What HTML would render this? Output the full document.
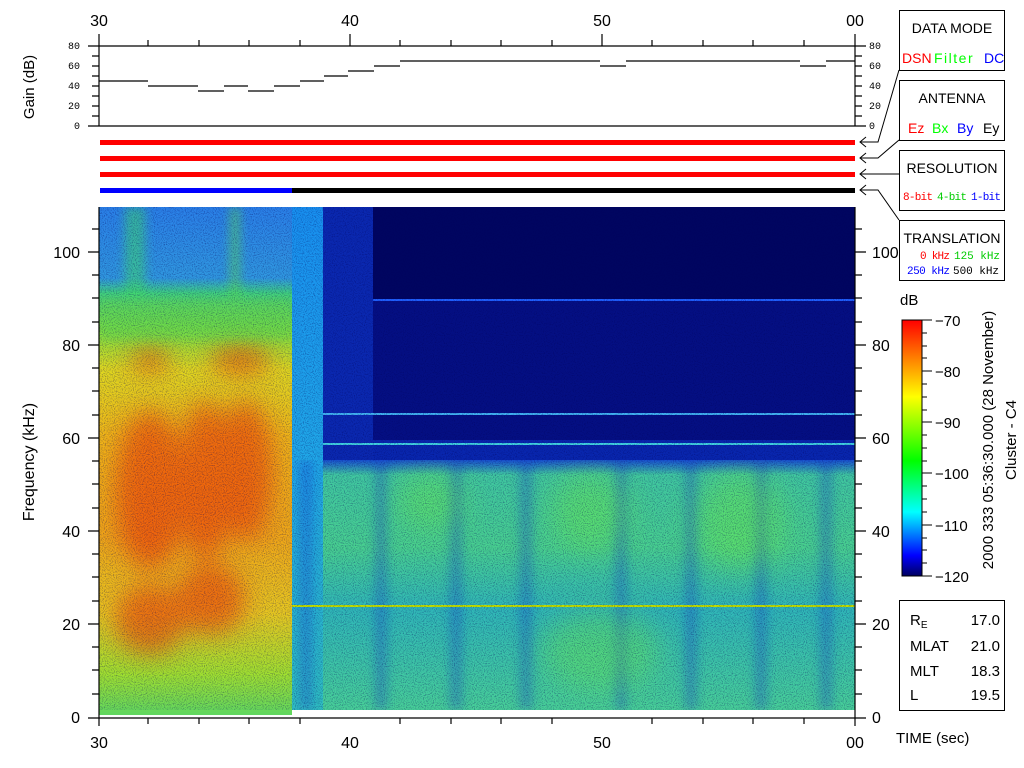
<!DOCTYPE html>
<html><head><meta charset="utf-8"><style>
html,body{margin:0;padding:0;background:#fff;width:1024px;height:768px;overflow:hidden}
svg text{font-family:"Liberation Sans",sans-serif}
</style></head><body>
<svg width="1024" height="768" viewBox="0 0 1024 768" xmlns="http://www.w3.org/2000/svg">
<defs>
<linearGradient id="lb" x1="0" y1="0" x2="0" y2="1">
<stop offset="0" stop-color="#2a80e8"/><stop offset="0.14" stop-color="#3098e0"/>
<stop offset="0.17" stop-color="#40d080"/><stop offset="0.24" stop-color="#80e040"/>
<stop offset="0.32" stop-color="#e0d820"/><stop offset="0.45" stop-color="#f0b818"/>
<stop offset="0.65" stop-color="#f0a818"/><stop offset="0.80" stop-color="#e8c820"/>
<stop offset="0.92" stop-color="#a0e030"/><stop offset="1" stop-color="#60d860"/>
</linearGradient>
<linearGradient id="cyc" x1="0" y1="0" x2="0" y2="1">
<stop offset="0" stop-color="#1890f0"/><stop offset="0.5" stop-color="#20a8e8"/><stop offset="1" stop-color="#30c0c0"/>
</linearGradient>
<linearGradient id="gr" x1="0" y1="0" x2="0" y2="1">
<stop offset="0" stop-color="#1850d0"/><stop offset="0.06" stop-color="#40c8a0"/><stop offset="0.35" stop-color="#48d090"/>
<stop offset="0.6" stop-color="#30b8b8"/><stop offset="1" stop-color="#48d098"/>
</linearGradient>
<linearGradient id="cb" x1="0" y1="0" x2="0" y2="1">
<stop offset="0" stop-color="#ff0000"/><stop offset="0.15" stop-color="#ff8000"/>
<stop offset="0.3" stop-color="#ffff00"/><stop offset="0.55" stop-color="#00ff00"/>
<stop offset="0.75" stop-color="#00ffff"/><stop offset="0.92" stop-color="#0000ff"/>
<stop offset="1" stop-color="#000060"/>
</linearGradient>
<filter id="bl" x="-30%" y="-30%" width="160%" height="160%"><feGaussianBlur stdDeviation="12"/></filter>
<filter id="bl2" x="-30%" y="-30%" width="160%" height="160%"><feGaussianBlur stdDeviation="5"/></filter>
<filter id="bl3" x="-50%" y="-50%" width="200%" height="200%"><feGaussianBlur stdDeviation="15"/></filter>
<filter id="nz" x="0" y="0" width="100%" height="100%">
<feTurbulence type="fractalNoise" baseFrequency="0.9" numOctaves="1" seed="3"/>
<feColorMatrix type="matrix" values="0 0 0 0 0  0 0 0 0 0  0 0 0 0 0.1  0 0 0 1.2 -0.55"/>
</filter>
<clipPath id="lc"><rect x="99" y="207" width="193" height="508"/></clipPath>
<clipPath id="gc"><rect x="292" y="460" width="563" height="250"/></clipPath>
</defs>

<g font-size="16" text-anchor="middle">
<text x="99" y="26">30</text><text x="350" y="26">40</text><text x="602" y="26">50</text><text x="855" y="26">00</text>
</g>
<g stroke="#000" stroke-width="1.2" fill="none">
<path d="M99 34V126M88 46H866M88 126H866M855 34V126"/>
<path d="M148 40V46M199 40V46M249 40V46M300 40V46M350 34V46M400 40V46M451 40V46M501 40V46M552 40V46M602 34V46M652 40V46M703 40V46M753 40V46M804 40V46"/>
<path d="M92 56H99M92 66H99M92 76H99M92 86H99M92 96H99M92 106H99M92 116H99"/>
<path d="M855 56H862M855 66H862M855 76H862M855 86H862M855 96H862M855 106H862M855 116H862"/>
<path d="M99 81H148M148 86H198M198 91H224M224 86H248M248 91H274M274 86H300M300 81H324M324 76H348M348 71H374M374 66H400M400 61H600M600 66H626M626 61H800M800 66H826M826 61H855"/>
</g>
<g font-size="10" text-anchor="end">
<text x="80" y="49" style="font-family:'Liberation Mono',monospace">80</text>
<text x="80" y="69" style="font-family:'Liberation Mono',monospace">60</text>
<text x="80" y="89" style="font-family:'Liberation Mono',monospace">40</text>
<text x="80" y="109" style="font-family:'Liberation Mono',monospace">20</text>
<text x="80" y="129" style="font-family:'Liberation Mono',monospace">0</text>
</g>
<g font-size="10">
<text x="869" y="49" style="font-family:'Liberation Mono',monospace">80</text>
<text x="869" y="69" style="font-family:'Liberation Mono',monospace">60</text>
<text x="869" y="89" style="font-family:'Liberation Mono',monospace">40</text>
<text x="869" y="109" style="font-family:'Liberation Mono',monospace">20</text>
<text x="869" y="129" style="font-family:'Liberation Mono',monospace">0</text>
</g>
<text transform="translate(34,87) rotate(-90)" font-size="15" text-anchor="middle">Gain (dB)</text>

<rect x="100" y="140" width="755" height="5" fill="#f00"/>
<rect x="100" y="156" width="755" height="5" fill="#f00"/>
<rect x="100" y="172" width="755" height="5" fill="#f00"/>
<rect x="100" y="188" width="192" height="5" fill="#00f"/>
<rect x="292" y="188" width="563" height="5" fill="#000"/>

<g stroke="#000" stroke-width="1" fill="none">
<path d="M899 70L878 142H860M866 137L860 142L866 147"/>
<path d="M899 140L878 158H860M866 153L860 158L866 163"/>
<path d="M899 174H860M866 169L860 174L866 179"/>
<path d="M899 220L878 190H860M866 185L860 190L866 195"/>
</g>

<rect x="99" y="207" width="193" height="508" fill="url(#lb)"/>
<g clip-path="url(#lc)">
<g fill="#f02000" opacity="0.5" filter="url(#bl)">
<ellipse cx="150" cy="490" rx="35" ry="80"/>
<ellipse cx="205" cy="480" rx="25" ry="80"/>
<ellipse cx="245" cy="470" rx="28" ry="70"/>
<ellipse cx="150" cy="620" rx="35" ry="35"/>
<ellipse cx="210" cy="600" rx="35" ry="35"/>
<ellipse cx="240" cy="360" rx="30" ry="15"/>
<ellipse cx="150" cy="360" rx="20" ry="12"/>
</g>
<g filter="url(#bl2)" opacity="0.5">
<rect x="125" y="207" width="20" height="90" fill="#40e060"/>
<rect x="230" y="207" width="10" height="90" fill="#60e040"/>
<rect x="99" y="300" width="193" height="40" fill="#60d850"/>
</g>
</g>
<rect x="292" y="207" width="31" height="503" fill="url(#cyc)"/>
<rect x="323" y="207" width="532" height="253" fill="#000560"/>
<rect x="323" y="207" width="50" height="253" fill="#0a28b0"/>
<rect x="373" y="300" width="482" height="160" fill="#0818a0" opacity="0.55"/>
<rect x="373" y="440" width="482" height="25" fill="#0a30c0" opacity="0.7"/>
<rect x="323" y="460" width="532" height="250" fill="url(#gr)"/>
<g clip-path="url(#gc)" filter="url(#bl2)" opacity="0.3">
<rect x="300" y="460" width="12" height="250" fill="#1030d0"/>
<rect x="375" y="460" width="12" height="250" fill="#1030d0"/>
<rect x="450" y="460" width="12" height="250" fill="#1030d0"/>
<rect x="520" y="460" width="12" height="250" fill="#1030d0"/>
<rect x="615" y="460" width="12" height="250" fill="#1030d0"/>
<rect x="685" y="460" width="12" height="250" fill="#1030d0"/>
<rect x="755" y="460" width="12" height="250" fill="#1030d0"/>
<rect x="820" y="460" width="12" height="250" fill="#1030d0"/>
</g>
<g clip-path="url(#gc)" filter="url(#bl3)" opacity="0.3" fill="#80ff20">
<ellipse cx="590" cy="510" rx="40" ry="40"/>
<ellipse cx="740" cy="520" rx="45" ry="50"/>
<ellipse cx="430" cy="500" rx="35" ry="30"/>
<ellipse cx="600" cy="650" rx="60" ry="40"/>
</g>
<rect x="373" y="299" width="482" height="2" fill="#2060ff"/>
<rect x="323" y="413" width="532" height="2" fill="#40b0f0"/>
<rect x="323" y="443" width="532" height="2" fill="#40d0e0"/>
<rect x="292" y="605" width="563" height="2" fill="#c0e000"/>
<rect x="99" y="207" width="756" height="503" filter="url(#nz)"/>

<g stroke="#000" stroke-width="1.2" fill="none">
<path d="M99 207V726M88 718H866M855 207V726"/>
<path d="M148 718V724M199 718V724M249 718V724M300 718V724M400 718V724M451 718V724M501 718V724M552 718V724M652 718V724M703 718V724M753 718V724M804 718V724"/>
<path d="M88 252H99M88 345H99M88 438H99M88 531H99M88 624H99M92 229H99M92 275H99M92 298H99M92 322H99M92 368H99M92 391H99M92 415H99M92 461H99M92 484H99M92 508H99M92 554H99M92 577H99M92 601H99M92 647H99M92 670H99M92 694H99"/>
<path d="M855 252H866M855 345H866M855 438H866M855 531H866M855 624H866M855 229H862M855 275H862M855 298H862M855 322H862M855 368H862M855 391H862M855 415H862M855 461H862M855 484H862M855 508H862M855 554H862M855 577H862M855 601H862M855 647H862M855 670H862M855 694H862"/>
</g>
<g font-size="16" text-anchor="end">
<text x="80" y="258">100</text><text x="80" y="351">80</text><text x="80" y="444">60</text><text x="80" y="537">40</text><text x="80" y="630">20</text><text x="80" y="723">0</text>
</g>
<g font-size="16">
<text x="872" y="258">100</text><text x="872" y="351">80</text><text x="872" y="444">60</text><text x="872" y="537">40</text><text x="872" y="630">20</text><text x="872" y="723">0</text>
</g>
<g font-size="16" text-anchor="middle">
<text x="99" y="748">30</text><text x="350" y="748">40</text><text x="602" y="748">50</text><text x="855" y="748">00</text>
</g>
<text transform="translate(34,462) rotate(-90)" font-size="16" text-anchor="middle">Frequency (kHz)</text>
<text x="896" y="743" font-size="15">TIME (sec)</text>

<text x="900" y="305" font-size="15">dB</text>
<rect x="902" y="320" width="20" height="256" fill="url(#cb)" stroke="#000"/>
<g stroke="#000"><path d="M922 320H932M922 371H932M922 422H932M922 473H932M922 525H932M922 576H932M922 333H927M922 346H927M922 358H927M922 384H927M922 397H927M922 410H927M922 435H927M922 448H927M922 461H927M922 486H927M922 499H927M922 512H927M922 538H927M922 550H927M922 563H927"/></g>
<g font-size="15">
<text x="935" y="326">−70</text><text x="935" y="377">−80</text><text x="935" y="428">−90</text><text x="935" y="479">−100</text><text x="935" y="531">−110</text><text x="935" y="582">−120</text>
</g>
<text transform="translate(993,440) rotate(-90)" font-size="15" text-anchor="middle">2000 333 05:36:30.000 (28 November)</text>
<text transform="translate(1016,440) rotate(-90)" font-size="15" text-anchor="middle">Cluster - C4</text>

<rect x="899.5" y="600.5" width="105" height="110" fill="none" stroke="#000"/>
<g font-size="15">
<text x="910" y="625">R<tspan font-size="10" dy="3">E</tspan></text>
<text x="910" y="651">MLAT</text><text x="910" y="676">MLT</text><text x="910" y="700">L</text>
</g>
<g font-size="15" text-anchor="end">
<text x="1000" y="625">17.0</text><text x="1000" y="651">21.0</text><text x="1000" y="676">18.3</text><text x="1000" y="700">19.5</text>
</g>

<g fill="#fff" stroke="#000">
<rect x="899.5" y="10.5" width="105" height="60"/>
<rect x="899.5" y="80.5" width="105" height="60"/>
<rect x="899.5" y="150.5" width="105" height="60"/>
<rect x="899.5" y="220.5" width="105" height="60"/>
</g>
<g font-size="14" text-anchor="middle">
<text x="952" y="33">DATA MODE</text>
<text x="952" y="103">ANTENNA</text>
<text x="952" y="173">RESOLUTION</text>
<text x="952" y="243">TRANSLATION</text>
</g>
<g font-size="14">
<text x="902" y="63" fill="#f00">DSN</text>
<text x="934" y="63" fill="#0f0" letter-spacing="1.5">Filter</text>
<text x="984" y="63" fill="#00f">DC</text>
<text x="908" y="133" fill="#f00">Ez</text><text x="932" y="133" fill="#0f0">Bx</text><text x="957" y="133" fill="#00f">By</text><text x="983" y="133" fill="#000">Ey</text>
</g>
<g font-size="11">
<text x="903" y="200" fill="#f00" textLength="30" style="font-family:'Liberation Mono',monospace">8-bit</text>
<text x="937" y="200" fill="#0c0" textLength="30" style="font-family:'Liberation Mono',monospace">4-bit</text>
<text x="971" y="200" fill="#00f" textLength="30" style="font-family:'Liberation Mono',monospace">1-bit</text>
<text x="920" y="259" fill="#f00" textLength="30" style="font-family:'Liberation Mono',monospace">0 kHz</text>
<text x="954" y="259" fill="#0c0" textLength="46" style="font-family:'Liberation Mono',monospace">125 kHz</text>
<text x="907" y="274" fill="#00f" textLength="43" style="font-family:'Liberation Mono',monospace">250 kHz</text>
<text x="953" y="274" fill="#000" textLength="46" style="font-family:'Liberation Mono',monospace">500 kHz</text>
</g>
</svg>
</body></html>
